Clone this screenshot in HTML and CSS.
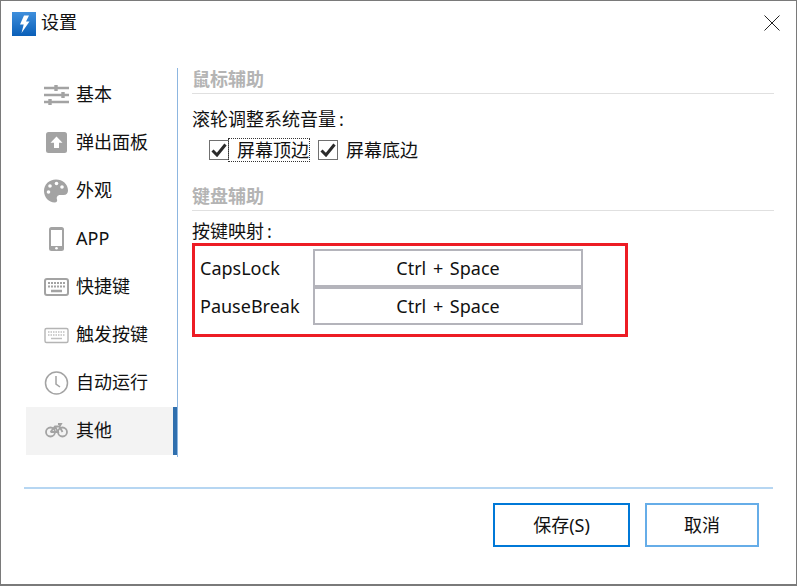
FILE: index.html
```html
<!DOCTYPE html>
<html lang="zh-CN">
<head>
  <meta charset="UTF-8">
  <title>设置</title>
  <link rel="stylesheet" href="styles.css">
</head>
<body>
  <div class="window">
    <div class="titlebar">
      <svg class="app-icon" width="24" height="24" viewBox="0 0 24 24">
        <defs>
          <linearGradient id="appBlue" x1="0" y1="0" x2="0" y2="1">
            <stop offset="0" stop-color="#3f8fdc"/>
            <stop offset="1" stop-color="#0a5fb8"/>
          </linearGradient>
        </defs>
        <rect width="24" height="24" fill="url(#appBlue)"/>
        <path d="M12 3.500h5l-3 6h3.500L9.500 21l2.200-8.500H8z" fill="#fff"/>
      </svg>
      <span class="title">设置</span>
      <svg class="close" width="16" height="16" viewBox="0 0 16 16">
        <path d="M.5.5l15 15M15.500.5l-15 15" stroke="#222" stroke-width="1" fill="none"/>
      </svg>
    </div>

    <div class="main">
      <ul class="nav">
        <li class="nav-item">
          <svg class="nav-icon" width="27" height="24" viewBox="0 0 27 24">
            <path d="M1 5h25M1 12h25M1 19h25" stroke="#a3a3a3" stroke-width="2.400"/>
            <path d="M13 2v6M20 9v6M7 16v6" stroke="#a3a3a3" stroke-width="3.400"/>
          </svg>
          <span>基本</span>
        </li>
        <li class="nav-item">
          <svg class="nav-icon" width="27" height="24" viewBox="0 0 27 24">
            <rect x="3" y="1" width="21" height="21" rx="2.500" fill="#a3a3a3"/>
            <path d="M13.500 5.500l6 6.200H16V17h-5v-5.300H7.500z" fill="#fff"/>
          </svg>
          <span>弹出面板</span>
        </li>
        <li class="nav-item">
          <svg class="nav-icon" width="27" height="24" viewBox="0 0 27 24">
            <path d="M13 .5C6 .5 1 5.500 1 12c0 6.500 5 11.500 10.500 11.500 2.500 0 3-1.500 2.500-3-.8-2.200.5-4.500 3-4.500h3.500c3 0 4.500-2 4.500-4.500C25 5 19.500.5 13 .5z" fill="#a3a3a3"/>
            <circle cx="5.500" cy="13" r="1.800" fill="#fff"/>
            <circle cx="7" cy="7" r="1.800" fill="#fff"/>
            <circle cx="13.500" cy="4.500" r="1.800" fill="#fff"/>
            <circle cx="19" cy="8" r="1.800" fill="#fff"/>
          </svg>
          <span>外观</span>
        </li>
        <li class="nav-item">
          <svg class="nav-icon" width="27" height="24" viewBox="0 0 27 24">
            <rect x="6" y="0" width="15" height="24" rx="2.500" fill="#a3a3a3"/>
            <rect x="8" y="3" width="11" height="16" fill="#fff"/>
            <circle cx="13.500" cy="21.300" r="1.300" fill="#fff"/>
          </svg>
          <span>APP</span>
        </li>
        <li class="nav-item">
          <svg class="nav-icon" width="27" height="24" viewBox="0 0 27 24">
            <rect x="2" y="4" width="23" height="16" rx="2" fill="#fff" stroke="#a3a3a3" stroke-width="2"/>
            <path d="M5 8h17M5 11.500h17" stroke="#a3a3a3" stroke-width="2" stroke-dasharray="2 1"/>
            <path d="M8 16h11" stroke="#a3a3a3" stroke-width="2.500"/>
          </svg>
          <span>快捷键</span>
        </li>
        <li class="nav-item">
          <svg class="nav-icon" width="27" height="24" viewBox="0 0 27 24">
            <rect x="2" y="5.500" width="23" height="14" rx="1.500" fill="#fff" stroke="#b4b4b4" stroke-width="1.400"/>
            <path d="M5 9h17M5 12h17" stroke="#c0c0c0" stroke-width="1.500" stroke-dasharray="1.500 1"/>
            <path d="M8 15.500h11" stroke="#c0c0c0" stroke-width="1.500"/>
          </svg>
          <span>触发按键</span>
        </li>
        <li class="nav-item">
          <svg class="nav-icon" width="27" height="24" viewBox="0 0 27 24">
            <circle cx="13.500" cy="12" r="11" fill="none" stroke="#a3a3a3" stroke-width="1.500"/>
            <path d="M13 5v8l4 3" fill="none" stroke="#a3a3a3" stroke-width="1.500"/>
          </svg>
          <span>自动运行</span>
        </li>
        <li class="nav-item active">
          <svg class="nav-icon" width="27" height="24" viewBox="0 0 27 24">
            <circle cx="7.500" cy="13" r="4.500" fill="none" stroke="#a3a3a3" stroke-width="1.800"/>
            <circle cx="19.500" cy="13" r="4.500" fill="none" stroke="#a3a3a3" stroke-width="1.800"/>
            <path d="M7.500 13l4.500-5.500h4.500l3 5.500M12 7.500l3 5.500H7.500M15 5h3l-1.500 2.500" fill="none" stroke="#a3a3a3" stroke-width="1.800"/>
          </svg>
          <span>其他</span>
        </li>
      </ul>

      <div class="content">
        <h2 class="section-title">鼠标辅助</h2>
        <p class="label">滚轮调整系统音量&#8201;:</p>
        <div class="check-row">
          <span class="check-box">
            <svg width="16" height="14" viewBox="0 0 16 14"><path d="M1.500 7.500l4.500 4.500L14.500 1.500" fill="none" stroke="#2b2b2b" stroke-width="3"/></svg>
          </span>
          <span class="check-text focused">屏幕顶边</span>
          <span class="check-box">
            <svg width="16" height="14" viewBox="0 0 16 14"><path d="M1.500 7.500l4.500 4.500L14.500 1.500" fill="none" stroke="#2b2b2b" stroke-width="3"/></svg>
          </span>
          <span class="check-text">屏幕底边</span>
        </div>

        <h2 class="section-title second">键盘辅助</h2>
        <p class="label label-keys">按键映射&#8201;:</p>
        <div class="key-box">
          <div class="key-row">
            <span class="key-name">CapsLock</span>
            <button class="key-btn">Ctrl + Space</button>
          </div>
          <div class="key-row">
            <span class="key-name">PauseBreak</span>
            <button class="key-btn">Ctrl + Space</button>
          </div>
        </div>
      </div>
    </div>

    <div class="footer">
      <button class="btn btn-save">保存(S)</button>
      <button class="btn btn-cancel">取消</button>
    </div>
  </div>
</body>
</html>
```

FILE: styles.css
```css
html, body {
  margin: 0;
  padding: 0;
  background: #fff;
}
body {
  font-family: "Noto Sans", "Noto Sans CJK SC", sans-serif;
  font-size: 18px;
  color: #111;
}
.window {
  box-sizing: border-box;
  width: 797px;
  height: 586px;
  border: 1px solid #7a7a7a;
  border-bottom-width: 2px;
  background: #fff;
  display: flex;
  flex-direction: column;
}
.titlebar {
  height: 45px;
  display: flex;
  align-items: center;
  padding: 0 16px 0 11px;
  flex-shrink: 0;
}
.app-icon {
  margin-top: 1px;
}
.title {
  margin-left: 5px;
  line-height: 24px;
  margin-top: -3px;
}
.close {
  margin-left: auto;
  margin-top: -1px;
}
.main {
  display: flex;
  height: 411px;
  padding: 22px 0 0 25px;
  box-sizing: border-box;
}
.nav {
  list-style: none;
  margin: 0;
  padding: 3px 0 2px;
  width: 151px;
  border-right: 1px solid #8db6e0;
  height: 384px;
}
.nav-item {
  height: 48px;
  display: flex;
  align-items: center;
  padding-left: 17px;
  line-height: 24px;
}
.nav-item span {
  margin-top: -2px;
}
.nav-item.active {
  background: #f3f3f3;
  box-shadow: inset -4px 0 0 #2f6fae;
}
.nav-icon {
  flex-shrink: 0;
  margin-right: 6px;
}
.content {
  flex: 1;
  padding: 0 22px 0 14px;
}
.section-title {
  margin: 0;
  height: 25px;
  line-height: 22px;
  font-size: 18px;
  font-weight: 700;
  color: #b4b4b4;
  border-bottom: 1px solid #e0e0e0;
}
.section-title.second {
  margin-top: 23px;
}
.label {
  margin: 13px 0 0;
  line-height: 24px;
}
.label-keys {
  margin-top: 8px;
}
.check-row {
  display: flex;
  align-items: center;
  height: 24px;
  margin-top: 7px;
  padding-left: 17px;
}
.check-box {
  box-sizing: border-box;
  width: 20px;
  height: 20px;
  border: 1px solid #707070;
  background: #fff;
  display: flex;
  align-items: center;
  justify-content: center;
}
.check-text {
  margin-left: 8px;
  margin-right: 8px;
  line-height: 22px;
}
.check-text.focused {
  margin-left: 0;
  padding-left: 8px;
  margin-right: 9px;
  outline: 1px dotted #333;
}
.key-box {
  box-sizing: border-box;
  width: 436px;
  height: 94px;
  border: 3px solid #ed1c24;
  padding: 3px 0 0 5px;
}
.key-row {
  display: flex;
  align-items: center;
  height: 38px;
}
.key-name {
  width: 113px;
  flex-shrink: 0;
  margin-top: -1px;
}
.key-btn {
  box-sizing: border-box;
  width: 270px;
  height: 38px;
  border: 2px solid #b4b4bb;
  background: #fff;
  font: inherit;
  color: inherit;
  padding: 0;
  word-spacing: 2px;
}
.footer {
  margin: 30px 23px 0 23px;
  height: 58px;
  border-top: 2px solid #b6d6f2;
  padding-top: 14px;
  display: flex;
  padding-left: 469px;
}
.btn {
  box-sizing: border-box;
  height: 44px;
  background: #fff;
  font: inherit;
  color: inherit;
  padding: 0 0 3px;
}
.btn-save {
  width: 137px;
  border: 2px solid #0078d7;
}
.btn-cancel {
  width: 114px;
  margin-left: 15px;
  border: 2px solid #66ade8;
}
```
